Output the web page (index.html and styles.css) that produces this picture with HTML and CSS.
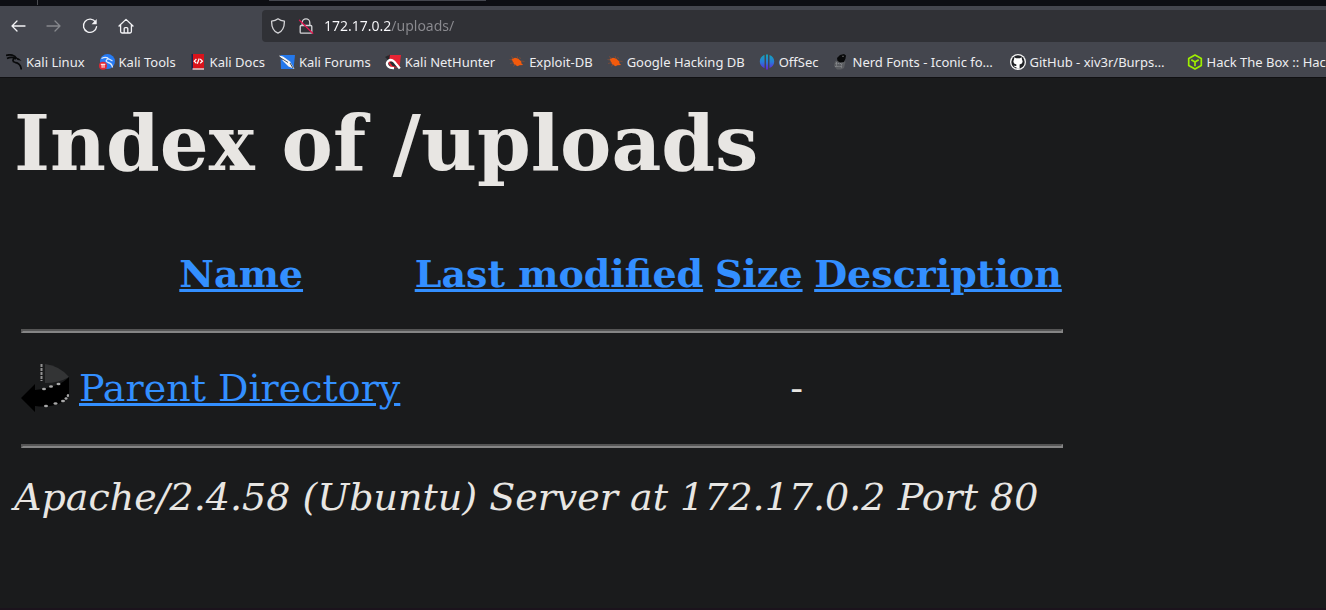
FILE: index.html
```html
<!DOCTYPE html>
<html lang="en">
<head>
<meta charset="utf-8">
<title>Index of /uploads</title>
<link rel="stylesheet" href="styles.css">
</head>
<body>
<div class="tabstrip"><span class="tab-divider"></span><span class="tab-edge"></span></div>
<header class="chrome">
  <div class="toolbar">
    <nav class="nav-buttons" aria-label="Navigation">
      <button type="button" aria-label="Back"><svg viewBox="0 0 16 16"><path d="M15 8H2M7 3L2 8l5 5"/></svg></button>
      <button type="button" aria-label="Forward" disabled><svg viewBox="0 0 16 16"><path d="M1 8h13M9 3l5 5-5 5"/></svg></button>
      <button type="button" aria-label="Reload"><svg viewBox="0 0 16 16"><path d="M13.6 4.2A6.6 6.6 0 1 0 14.6 8.6"/><path class="solid" d="M14.7 1v5.2H9.6z"/></svg></button>
      <button type="button" aria-label="Home"><svg viewBox="0 0 16 16"><path d="M1 8L8 1.4 15 8M2.6 7v6.6q0 1.4 1.4 1.4h8q1.4 0 1.4-1.4V7M6.2 15v-4.400q0-1 1-1h1.600q1 0 1 1V15"/></svg></button>
    </nav>
    <div class="urlbar">
      <svg viewBox="0 0 16 16"><path d="M8 .8C6 2.300 4 2.900 1.600 3.200C1.500 8.500 3.500 13.200 8 15.200C12.500 13.200 14.500 8.500 14.400 3.200C12 2.900 10 2.300 8 .8z"/></svg>
      <svg viewBox="0 0 16 16"><path d="M4.200 7.500V4.700a3.800 3.800 0 0 1 7.600 0v2.800M3.200 7.500h9.600q1 0 1 1v5.700q0 1-1 1H3.200q-1 0-1-1V8.500q0-1 1-1z"/><path class="slash" d="M1.500 2.200L14.700 15.300"/></svg>
      <input class="address" type="text" value="172.17.0.2/uploads/" aria-label="Address" spellcheck="false">
    </div>
  </div>
  <nav class="bookmarks" aria-label="Bookmarks">
    <a href="#"><svg viewBox="0 0 16 16"><path d="M0 1.500C4 0 9 1 10.500 4.500M1 4.500C5 2.500 8 3.500 10 5M9.500 3.500C6.500 5 6 7.500 9 8.300C13 9 15 11 15.300 15.500" fill="none" stroke="#090a0b" stroke-width="1.700"/><path d="M9 3l4 1.500 2.500 2.300-4-.9z" fill="#090a0b"/></svg><span>Kali Linux</span></a>
    <a href="#"><svg viewBox="0 0 16 16"><circle cx="8.500" cy="7.500" r="7.500" fill="#267bf4"/><path d="M2.500 4.500Q8 2 10 5.500M9.500 4.500q-4.500 2.500-.5 4 4 .8 4.500 5M10 5l3.500 2" fill="none" stroke="#dce9fb" stroke-width="1.300"/><circle cx="4" cy="11.800" r="4" fill="#e32834"/><path d="M1.800 10.300h4.500M3.100 10.300v3.500M5 10.300v3.500" fill="none" stroke="#fff"/></svg><span>Kali Tools</span></a>
    <a href="#"><svg viewBox="0 0 16 16"><path d="M2 0h12v15.500H2z" fill="#d9131b"/><path d="M1.500 0H3v15.500H1.500z" fill="#17234f"/><path d="M2.500 14.300H14v1.400H2.500z" fill="#ddd"/><path d="M6.400 5L4.200 7.200l2.200 2M10.200 5l2.200 2.200-2.200 2M9.200 4.500L7.300 9.700" fill="none" stroke="#fff" stroke-width="1.200"/></svg><span>Kali Docs</span></a>
    <a href="#"><svg viewBox="0 0 16 16"><path d="M1.500 1H16L14.500 15H2z" fill="#2478ec"/><path d="M0 1.500L4 2.500l7 5 4.500 7.500-6-2.500L4 7z" fill="#f7f7f7"/><path d="M1 3.500l8 5M11 9l3 5M3.500 6l-1-1" fill="none" stroke="#333b45" stroke-width=".9"/></svg><span>Kali Forums</span></a>
    <a href="#"><svg viewBox="0 0 16 16"><path d="M3 1H16L14.500 13.500H6L3 8z" fill="#e72434"/><path d="M0 3l5-2.500L4 7z" fill="#25282b"/><path d="M4.500 8q3-2 5 .8l3 4.200-5-1z" fill="#282c31"/><path d="M14.800 14.500L9.300 7.800Q6 4.500 3.200 7T3.500 12.800q1.500 1.600 5.500 1.400" fill="none" stroke="#fff" stroke-width="2.300"/></svg><span>Kali NetHunter</span></a>
    <a href="#"><svg viewBox="0 0 16 16"><path d="M2.500 5L6 3.700l3 .8 3.200 2.800.3 2.200 1.700 1.500-3.700.2-2 1-3.500-2z" fill="#f35a0c"/><path d="M2 2.500l3 2M.5 5.500l3 .6M1 9.500l4-1M4 12.500l2.500-2M8 2l1 3M10.500 3l1 2M12 7l3.500.5" fill="none" stroke="#8b4e33" stroke-width=".7"/></svg><span>Exploit-DB</span></a>
    <a href="#"><svg viewBox="0 0 16 16"><path d="M2.500 5L6 3.700l3 .8 3.200 2.800.3 2.200 1.700 1.500-3.700.2-2 1-3.500-2z" fill="#f35a0c"/><path d="M2 2.500l3 2M.5 5.500l3 .6M1 9.500l4-1M4 12.500l2.500-2M8 2l1 3M10.500 3l1 2M12 7l3.500.5" fill="none" stroke="#8b4e33" stroke-width=".7"/></svg><span>Google Hacking DB</span></a>
    <a href="#"><svg viewBox="0 0 16 16"><defs><linearGradient id="offsec" x2="0" y2="1"><stop stop-color="#13a7b8"/><stop offset=".5" stop-color="#287bd8"/><stop offset="1" stop-color="#6520d8"/></linearGradient></defs><path d="M5.500 1v13C2.500 13 .8 10.800.8 7.600S2.500 2 5.500 1zM10.500 1v13c3-1 4.700-3.200 4.700-6.400S13.500 2 10.500 1zM7 .5h2V15.500H7z" fill="url(#offsec)"/></svg><span>OffSec</span></a>
    <a class="long" href="#"><svg viewBox="0 0 16 16"><path d="M2 7.500L5 6l6-1 1.500 3-1.500 6-3 1.500H4L1 12z" fill="#5b5d61"/><path d="M4 4l3-3 4-1 2 1.500-.5 3L11 8 7 8.500 4.500 7z" fill="#08090a"/><path d="M2.500 9.500h7M2 12.500h7M8.500 10v4M3.500 8v5" fill="none" stroke="#8b8d90" stroke-width=".8" stroke-dasharray="1.500 .7"/><path d="M9.500 2.300h1" stroke="#aaa"/></svg><span>Nerd Fonts - Iconic fo…</span></a>
    <a class="long" href="#"><svg viewBox="0 0 16 16"><circle cx="8" cy="8" r="8" fill="#f4f4f4"/><circle cx="8" cy="8" r="6.700" fill="#202226"/><path d="M4.300 3.300L6.200 4.300h3.600l1.900-1 .3 2.200q2 4-2.400 5v4.200H6.400v-1.600q-2 .3-2.800-1.500 1.500.8 2.800.2v-1.300Q2 9.500 4 5.500z" fill="#fff"/></svg><span>GitHub - xiv3r/Burps…</span></a>
    <a href="#"><svg viewBox="0 0 16 16"><path d="M8 1l6.300 3.500v7L8 15l-6.300-3.500v-7zM4.300 5.700L8 7.900l3.700-2.200M8 7.900v4.300" fill="none" stroke="#9fef00" stroke-width="1.700" stroke-linejoin="round"/></svg><span>Hack The Box :: Hack</span></a>
  </nav>
</header>
<main class="page">
  <h1>Index of /uploads</h1>
  <table>
    <thead>
      <tr>
        <th class="icon-cell"></th>
        <th><a href="#">Name</a></th>
        <th><a href="#">Last modified</a></th>
        <th><a href="#">Size</a></th>
        <th><a href="#">Description</a></th>
      </tr>
      <tr class="rule"><th colspan="5"><hr></th></tr>
    </thead>
    <tbody>
      <tr>
        <td class="icon-cell"><svg viewBox="0 0 48 53" role="img" aria-label="Parent directory"><path d="M24 4Q39 6 48 17Q38 23 24 23z" fill="#333435"/><path d="M0 38L14 24v6Q39 27 48 17v18Q39 49 14 46v6z" fill="#000"/><path d="M20.500 4v17" stroke="#929292" stroke-width="2" stroke-dasharray="3 1" fill="none"/><g fill="#a8a8a8"><ellipse cx="23" cy="29" rx="2" ry="1.300"/><ellipse cx="30" cy="26.500" rx="2" ry="1.300"/><ellipse cx="37.500" cy="24" rx="2" ry="1.300"/><ellipse cx="25" cy="46" rx="2" ry="1.300"/><ellipse cx="34.500" cy="43.500" rx="2" ry="1.300"/><ellipse cx="42" cy="41" rx="2" ry="1.300"/><ellipse cx="45" cy="38.500" rx="1.500" ry="1.300"/><ellipse cx="47" cy="35.500" rx="1.300" ry="1.500"/></g></svg></td>
        <td><a href="#">Parent Directory</a></td>
        <td></td>
        <td class="size">-</td>
        <td></td>
      </tr>
      <tr class="rule"><th colspan="5"><hr></th></tr>
    </tbody>
  </table>
  <address>Apache/2.4.58 (Ubuntu) Server at 172.17.0.2 Port 80</address>
</main>
</body>
</html>
```
FILE: styles.css
```css
* { box-sizing: border-box; }
body {
  margin: 0;
  min-height: 100vh;
  display: flex;
  flex-direction: column;
  overflow-x: hidden;
  background: #1a1b1c;
  border-bottom: 2px solid #1b131c;
}
.tabstrip {
  display: flex;
  gap: 231px;
  height: 6px;
  padding-left: 37px;
  background: #0d0e13;
}
.tab-divider { width: 1px; height: 5px; background: #4b4c51; }
.tab-edge { width: 217px; height: 1px; background: #44464e; }
.chrome {
  background: #44464e;
  border-bottom: 1px solid #101012;
  color: #fbfbfe;
  font-family: "Noto Sans", sans-serif;
  overflow: hidden;
}
.toolbar { display: flex; padding-top: 4px; }
.nav-buttons {
  display: flex;
  flex: none;
  width: 262px;
  align-items: center;
}
.nav-buttons button {
  display: flex;
  justify-content: center;
  width: 36px;
  padding: 0;
  border: 0;
  background: none;
  color: #f3f3f6;
}
.nav-buttons button:disabled { color: #86888d; }
svg { display: block; flex: none; }
.toolbar svg {
  width: 16px;
  height: 16px;
  fill: none;
  stroke: currentColor;
  stroke-width: 1.3;
  stroke-linecap: round;
  stroke-linejoin: round;
}
.toolbar .solid { fill: currentColor; stroke: none; }
.toolbar .slash { stroke: #e2134e; }
.urlbar {
  display: flex;
  flex: 1;
  align-items: center;
  gap: 12px;
  height: 32px;
  padding-left: 8px;
  border-radius: 4px 0 0 4px;
  background: #303136;
  color: #d5d5d8;
}
.address {
  flex: 1;
  min-width: 0;
  padding: 0;
  border: 0;
  outline: 0;
  background: linear-gradient(to right, #fbfbfe 67px, #8b8b90 67px);
  background-clip: text;
  -webkit-text-fill-color: transparent;
  color: #fbfbfe;
  font: 14px/20px "Noto Sans", sans-serif;
  margin-left: -2px;
}
.bookmarks {
  display: flex;
  gap: 14px;
  padding: 11px 0 6px 6px;
}
.bookmarks a {
  display: flex;
  flex: none;
  align-items: center;
  gap: 4px;
  color: #ededf0;
  font-size: 13px;
  line-height: 18px;
  text-decoration: none;
  white-space: nowrap;
}
.bookmarks .long { width: 163px; }
.bookmarks svg { width: 16px; height: 16px; }
.page {
  flex: 1;
  padding: 20px 14px 0;
  color: #e8e6e3;
  font: 38px/45px "DejaVu Serif", serif;
}
h1 { margin: 0 0 51px; font-size: 77px; line-height: 90px; }
table { min-width: 1057px; border-spacing: 5px 6px; }
th, td { padding: 6px 3px 6px 2px; white-space: nowrap; }
.icon-cell { padding: 0 3px 0 2px; width: 53px; vertical-align: top; }
.icon-cell svg { width: 48px; height: 53px; }
.rule th { padding: 0 3px 0 2px; }
hr {
  height: 4px;
  margin: 21px 0;
  border: 2px solid;
  border-color: #555 #858585 #858585 #555;
}
a { color: #338fff; }
.size { text-align: right; }
```
